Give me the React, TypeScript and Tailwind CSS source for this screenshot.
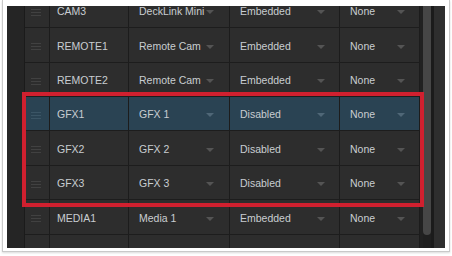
import React from "react";

type Row = { name: string; src: string; audio: string; out: string; h: number; hi?: boolean };

const rows: Row[] = [
  { name: "CAM3", src: "DeckLink Mini", audio: "Embedded", out: "None", h: 34 },
  { name: "REMOTE1", src: "Remote Cam", audio: "Embedded", out: "None", h: 35 },
  { name: "REMOTE2", src: "Remote Cam", audio: "Embedded", out: "None", h: 34 },
  { name: "GFX1", src: "GFX 1", audio: "Disabled", out: "None", h: 34, hi: true },
  { name: "GFX2", src: "GFX 2", audio: "Disabled", out: "None", h: 35 },
  { name: "GFX3", src: "GFX 3", audio: "Disabled", out: "None", h: 34 },
  { name: "MEDIA1", src: "Media 1", audio: "Embedded", out: "None", h: 35 },
  { name: "", src: "", audio: "", out: "", h: 34 },
];

function Arrow({ hi }: { hi?: boolean }) {
  return (
    <svg width="8" height="4" viewBox="0 0 8 4" className="shrink-0">
      <polygon points="0,0 8,0 4,4" fill={hi ? "#4f6777" : "#545454"} />
    </svg>
  );
}

function Handle({ hi }: { hi?: boolean }) {
  const c = hi ? "bg-[#3b5565]" : "bg-[#414141]";
  return (
    <div className="flex flex-col gap-[2px] w-[10px]">
      <div className={`h-[1px] ${c}`} />
      <div className={`h-[1px] ${c}`} />
      <div className={`h-[1px] ${c}`} />
    </div>
  );
}

function Select({ text, w, hi, textW }: { text: string; w: string; hi?: boolean; textW: string }) {
  return (
    <div className={`${w} h-full border-r border-[#1c1c1c] flex items-center pl-[10px] pt-[3px]`}>
      <div className={`${textW} overflow-hidden whitespace-nowrap`}>{text}</div>
      {text !== "" && <Arrow hi={hi} />}
    </div>
  );
}

export default function App() {
  return (
    <div className="w-[452px] h-[256px] bg-white pl-[2px] overflow-hidden" style={{ fontFamily: '"Liberation Sans", Arial, sans-serif' }}>
      <div className="w-[448px] h-[252px] border border-t-0 border-[#c9c9c9] shadow-[0_1px_2px_rgba(0,0,0,0.15)] pl-[4px] pt-[6px]">
        <div className="relative w-[438px] h-[242px] bg-[#2c2c2c] flex">
          <div className="w-[18px] h-full bg-[#252525] border-r border-[#1b1b1b]" />
          <div className="w-[395px] h-full overflow-hidden">
            <div className="-mt-[12px] flex flex-col">
              {rows.map((r, i) => (
                <div
                  key={i}
                  style={{ height: r.h }}
                  className={`flex border-b border-[#1d1d1d] text-[10.5px] text-[#c9cdd1] ${r.hi ? "bg-[#2a4353]" : "bg-[#2d2d2d]"}`}
                >
                  <div className="w-[25px] h-full border-r border-[#1c1c1c] flex items-center pl-[6px] pt-[3px]">
                    <Handle hi={r.hi} />
                  </div>
                  <div className="w-[79px] h-full border-r border-[#1c1c1c] flex items-center pl-[7px] pt-[3px] whitespace-nowrap">
                    {r.name}
                  </div>
                  <Select text={r.src} w="w-[101px]" textW="w-[67px]" hi={r.hi} />
                  <Select text={r.audio} w="w-[110px]" textW="w-[77px]" hi={r.hi} />
                  <Select text={r.out} w="w-[80px]" textW="w-[47px]" hi={r.hi} />
                </div>
              ))}
            </div>
          </div>
          <div className="w-[25px] h-full flex">
            <div className="w-[3px] h-full bg-[#212121]" />
            <div className="w-[8px] h-full bg-[#1f1f1f]">
              <div className="w-[8px] h-[229px] bg-[#464646] rounded-b-[4px]" />
            </div>
            <div className="w-[3px] h-full bg-[#1b1b1b]" />
            <div className="w-[11px] h-full bg-[#2e2e2e]" />
          </div>
          <div className="absolute left-[15px] top-[86px] w-[402px] h-[115px] border-[4px] border-[#d0202f] pointer-events-none" />
        </div>
      </div>
    </div>
  );
}
